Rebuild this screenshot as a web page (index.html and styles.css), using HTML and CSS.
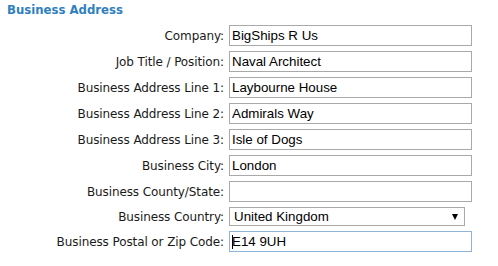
FILE: index.html
```html
<!DOCTYPE html>
<html lang="en">
<head>
<meta charset="utf-8">
<title>Business Address</title>
<link rel="stylesheet" href="styles.css">
</head>
<body>
<section class="panel">
  <h2 class="section-title">Business Address</h2>
  <form class="form-grid">
    <label class="field-label" for="company">Company:</label>
    <input class="field-input" id="company" type="text" value="BigShips R Us">

    <label class="field-label" for="job">Job Title / Position:</label>
    <input class="field-input" id="job" type="text" value="Naval Architect">

    <label class="field-label" for="line1">Business Address Line 1:</label>
    <input class="field-input" id="line1" type="text" value="Laybourne House">

    <label class="field-label" for="line2">Business Address Line 2:</label>
    <input class="field-input" id="line2" type="text" value="Admirals Way">

    <label class="field-label" for="line3">Business Address Line 3:</label>
    <input class="field-input" id="line3" type="text" value="Isle of Dogs">

    <label class="field-label" for="city">Business City:</label>
    <input class="field-input" id="city" type="text" value="London">

    <label class="field-label" for="county">Business County/State:</label>
    <input class="field-input" id="county" type="text" value="">

    <label class="field-label" for="country">Business Country:</label>
    <span class="select-wrap">
      <select class="field-select" id="country">
        <option>United Kingdom</option>
      </select>
    </span>

    <label class="field-label" for="postal">Business Postal or Zip Code:</label>
    <span class="input-wrap">
      <input class="field-input is-focused" id="postal" type="text" value="E14 9UH">
      <span class="caret"></span>
    </span>
  </form>
</section>
</body>
</html>
```
FILE: styles.css
```css
html, body {
  margin: 0;
  padding: 0;
  background: #ffffff;
}

.panel {
  padding: 2px 0 0 7px;
}

.section-title {
  margin: 0;
  font-family: "DejaVu Sans", Verdana, sans-serif;
  font-stretch: condensed;
  font-weight: bold;
  font-size: 13px;
  line-height: 16px;
  color: #2f7fbf;
}

.form-grid {
  display: grid;
  grid-template-columns: 217px 243px;
  column-gap: 5px;
  row-gap: 5px;
  align-items: center;
  margin: 7px 0 0 0;
}

.field-label {
  justify-self: end;
  font-family: "DejaVu Sans", Verdana, sans-serif;
  font-size: 12px;
  letter-spacing: -0.1px;
  color: #1a1a1a;
  white-space: nowrap;
}

.field-input {
  box-sizing: border-box;
  width: 243px;
  height: 21px;
  margin: 0;
  padding: 1px 2px;
  border: 1px solid #a9a9a9;
  font-family: "Liberation Sans", Arial, sans-serif;
  font-size: 13.33px;
  color: #000;
  background: #fff;
  outline: none;
}

.field-input.is-focused {
  border-color: #8fb3d9;
}

.input-wrap {
  position: relative;
  display: block;
  width: 243px;
  height: 21px;
}

.caret {
  position: absolute;
  left: 3px;
  top: 4px;
  width: 1px;
  height: 14px;
  background: #000;
}

.select-wrap {
  position: relative;
  display: block;
  width: 236px;
  height: 19px;
}

.field-select {
  box-sizing: border-box;
  width: 236px;
  height: 19px;
  margin: 0;
  padding: 0 4px;
  border: 1px solid #a9a9a9;
  border-radius: 0;
  -webkit-appearance: none;
  appearance: none;
  background: #fff;
  font-family: "Liberation Sans", Arial, sans-serif;
  font-size: 13.33px;
  color: #000;
}

.select-wrap::after {
  content: "";
  position: absolute;
  right: 7px;
  top: 7px;
  width: 0;
  height: 0;
  border-left: 3.5px solid transparent;
  border-right: 3.5px solid transparent;
  border-top: 6px solid #000;
  pointer-events: none;
}
```
